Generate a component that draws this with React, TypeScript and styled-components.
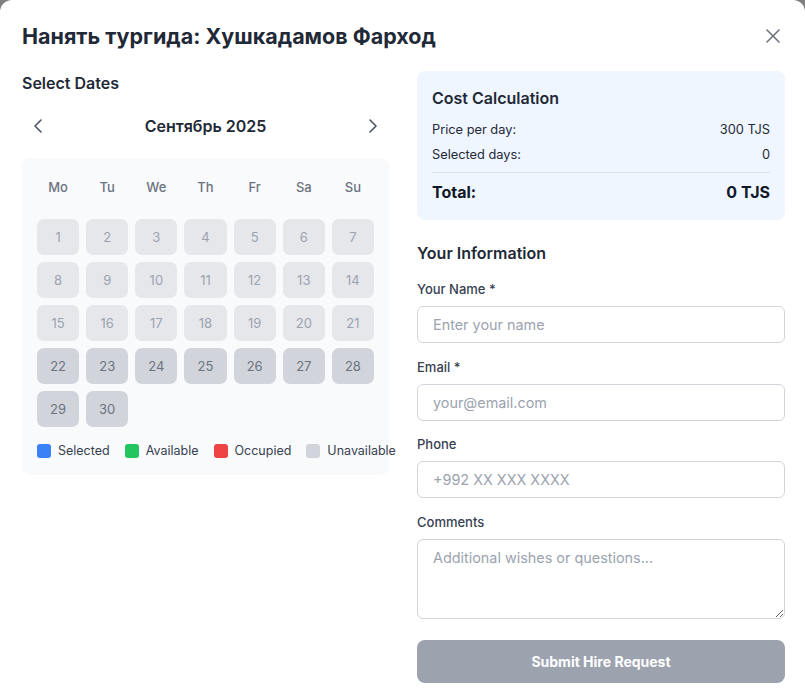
import React from "react";
import styled, { createGlobalStyle } from "styled-components";
import { X, ChevronLeft, ChevronRight } from "lucide-react";

const GlobalStyle = createGlobalStyle`
  * { box-sizing: border-box; }
  html, body { margin: 0; padding: 0; }
  body {
    background: #808080;
    font-family: Inter, "Noto Sans", sans-serif;
    color: #1f2937;
  }
`;

const Modal = styled.div`
  background: #ffffff;
  border-radius: 12px 12px 0 0;
  min-height: 100vh;
  padding: 22px 20px 24px 22px;
`;

const Header = styled.div`
  display: flex;
  align-items: center;
  justify-content: space-between;
  height: 28px;
  margin-bottom: 21px;
`;

const Title = styled.h2`
  margin: 0;
  font-size: 21.5px;
  line-height: 28px;
  font-weight: 700;
  color: #1f2937;
`;

const CloseButton = styled.button`
  border: none;
  background: none;
  padding: 0;
  display: flex;
  color: #6b7280;
  cursor: pointer;
`;

const Columns = styled.div`
  display: grid;
  grid-template-columns: 367px 368px;
  column-gap: 28px;
  align-items: start;
`;

const Column = styled.div`
  display: flex;
  flex-direction: column;
`;

const SectionTitle = styled.h3<{ $mb: number }>`
  margin: 0 0 ${(p) => p.$mb}px;
  font-size: 16px;
  line-height: 24px;
  font-weight: 600;
  color: #1f2937;
`;

const Nav = styled.div`
  display: flex;
  align-items: center;
  justify-content: space-between;
  height: 32px;
  margin-bottom: 16px;
`;

const NavButton = styled.button`
  border: none;
  background: none;
  padding: 4px;
  display: flex;
  color: #4b5563;
  cursor: pointer;
`;

const Month = styled.span`
  font-size: 16px;
  font-weight: 600;
  color: #1f2937;
`;

const CalendarBox = styled.div`
  background: #f9fafb;
  border-radius: 8px;
  padding: 16px 15px 14px;
`;

const DayGrid = styled.div`
  display: grid;
  grid-template-columns: repeat(7, 1fr);
  column-gap: 7px;
  row-gap: 7px;
`;

const WeekHead = styled.div`
  display: grid;
  grid-template-columns: repeat(7, 1fr);
  column-gap: 7px;
  height: 26px;
  margin-bottom: 19px;
`;

const WeekDay = styled.div`
  text-align: center;
  font-size: 13px;
  line-height: 26px;
  font-weight: 500;
  color: #6b7280;
`;

const Day = styled.div<{ $dim: boolean }>`
  height: 36px;
  border-radius: 7px;
  display: flex;
  align-items: center;
  justify-content: center;
  font-size: 13px;
  background: ${(p) => (p.$dim ? "#e5e7eb" : "#d1d5db")};
  color: ${(p) => (p.$dim ? "#9ca3af" : "#6b7280")};
`;

const Legend = styled.div`
  display: flex;
  gap: 15px;
  margin-top: 14px;
  white-space: nowrap;
`;

const LegendItem = styled.div`
  display: flex;
  align-items: center;
  gap: 7px;
  font-size: 12.5px;
  line-height: 20px;
  color: #374151;
`;

const Swatch = styled.span<{ $color: string }>`
  width: 14px;
  height: 14px;
  border-radius: 3px;
  background: ${(p) => p.$color};
`;

const CostBox = styled.div`
  background: #eff6ff;
  border-radius: 8px;
  padding: 15px 15px 16px;
  margin-bottom: 21px;
`;

const CostTitle = styled.h3`
  margin: 0 0 10px;
  font-size: 16px;
  line-height: 24px;
  font-weight: 600;
  color: #1f2937;
`;

const CostRow = styled.div<{ $total?: boolean }>`
  display: flex;
  justify-content: space-between;
  font-size: ${(p) => (p.$total ? "16px" : "12.8px")};
  line-height: ${(p) => (p.$total ? "24px" : "20px")};
  font-weight: ${(p) => (p.$total ? 700 : 400)};
  color: ${(p) => (p.$total ? "#111827" : "#1f2937")};
  & + & {
    margin-top: 5px;
  }
`;

const Divider = styled.div`
  height: 1px;
  background: #dde3ea;
  margin: 7px 0 7px;
`;

const Field = styled.div`
  display: flex;
  flex-direction: column;
  gap: 7px;
  & + & {
    margin-top: 13.5px;
  }
`;

const Label = styled.label`
  font-size: 13px;
  line-height: 20px;
  font-weight: 500;
  color: #374151;
`;

const Input = styled.input`
  height: 37px;
  border: 1px solid #d1d5db;
  border-radius: 6px;
  padding: 0 15px;
  font-family: inherit;
  font-size: 14.4px;
  color: #1f2937;
  background: #fff;
  outline: none;
  &::placeholder {
    color: #9ca3af;
  }
`;

const TextArea = styled.textarea`
  height: 80px;
  border: 1px solid #d1d5db;
  border-radius: 6px;
  padding: 8px 15px;
  font-family: inherit;
  font-size: 14.4px;
  line-height: 20px;
  color: #1f2937;
  background: #fff;
  outline: none;
  resize: vertical;
  &::placeholder {
    color: #9ca3af;
  }
`;

const Submit = styled.button`
  margin-top: 21px;
  height: 43px;
  border: none;
  border-radius: 8px;
  background: #9ca3af;
  color: #ffffff;
  font-family: inherit;
  font-size: 14px;
  font-weight: 700;
  cursor: not-allowed;
`;

const weekDays = ["Mo", "Tu", "We", "Th", "Fr", "Sa", "Su"];
const days = Array.from({ length: 30 }, (_, i) => i + 1);
const legend = [
  { label: "Selected", color: "#3b82f6" },
  { label: "Available", color: "#22c55e" },
  { label: "Occupied", color: "#ef4444" },
  { label: "Unavailable", color: "#d1d5db" },
];

export default function App() {
  return (
    <>
      <GlobalStyle />
      <Modal>
        <Header>
          <Title>Нанять тургида: Хушкадамов Фарход</Title>
          <CloseButton aria-label="Close">
            <X size={24} strokeWidth={1.6} />
          </CloseButton>
        </Header>
        <Columns>
          <Column>
            <SectionTitle $mb={15}>Select Dates</SectionTitle>
            <Nav>
              <NavButton aria-label="Previous month">
                <ChevronLeft size={24} strokeWidth={1.6} />
              </NavButton>
              <Month>Сентябрь 2025</Month>
              <NavButton aria-label="Next month">
                <ChevronRight size={24} strokeWidth={1.6} />
              </NavButton>
            </Nav>
            <CalendarBox>
              <WeekHead>
                {weekDays.map((d) => (
                  <WeekDay key={d}>{d}</WeekDay>
                ))}
              </WeekHead>
              <DayGrid>
                {days.map((d) => (
                  <Day key={d} $dim={d < 22}>
                    {d}
                  </Day>
                ))}
              </DayGrid>
              <Legend>
                {legend.map((l) => (
                  <LegendItem key={l.label}>
                    <Swatch $color={l.color} />
                    {l.label}
                  </LegendItem>
                ))}
              </Legend>
            </CalendarBox>
          </Column>
          <Column>
            <CostBox>
              <CostTitle>Cost Calculation</CostTitle>
              <CostRow>
                <span>Price per day:</span>
                <span>300 TJS</span>
              </CostRow>
              <CostRow>
                <span>Selected days:</span>
                <span>0</span>
              </CostRow>
              <Divider />
              <CostRow $total>
                <span>Total:</span>
                <span>0 TJS</span>
              </CostRow>
            </CostBox>
            <SectionTitle $mb={14}>Your Information</SectionTitle>
            <Field>
              <Label>Your Name *</Label>
              <Input placeholder="Enter your name" />
            </Field>
            <Field>
              <Label>Email *</Label>
              <Input placeholder="your@email.com" />
            </Field>
            <Field>
              <Label>Phone</Label>
              <Input placeholder="+992 XX XXX XXXX" />
            </Field>
            <Field>
              <Label>Comments</Label>
              <TextArea placeholder="Additional wishes or questions..." />
            </Field>
            <Submit disabled>Submit Hire Request</Submit>
          </Column>
        </Columns>
      </Modal>
    </>
  );
}
